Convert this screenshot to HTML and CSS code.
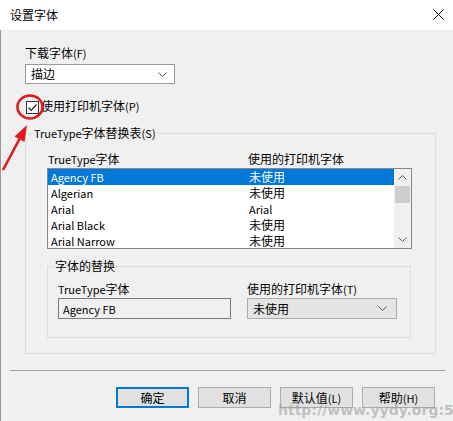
FILE: index.html
```html
<!DOCTYPE html>
<html lang="zh-CN">
<head>
<meta charset="utf-8">
<title>设置字体</title>
<link rel="stylesheet" href="styles.css">
</head>
<body>
<div class="window">
  <header class="titlebar">
    <span class="title">设置字体</span>
    <svg class="close" width="11" height="11" viewBox="0 0 11 11"><path d="M0.5 0.5 L10.5 10.5 M10.5 0.5 L0.5 10.5" stroke="#000" stroke-width="1" fill="none"/></svg>
  </header>
  <main class="client">
    <div class="content">
      <div class="lbl">下载字体<span class="lat">(F)</span></div>
      <div class="combo combo-white">
        <span>描边</span>
        <svg class="chev" width="9" height="5" viewBox="0 0 9 5"><path d="M0.5 0.5 L4.5 4.5 L8.5 0.5" stroke="#555" fill="none"/></svg>
      </div>
      <div class="check-row">
        <span class="checkbox"><svg width="11" height="11" viewBox="0 0 11 11"><path d="M1.5 5.5 L4.2 8.3 L9.5 2.5" stroke="#222" stroke-width="1.2" fill="none"/></svg></span>
        <span>使用打印机字体<span class="lat">(P)</span></span>
      </div>
      <fieldset class="group outer">
        <legend><span class="lat">TrueType</span>字体替换表<span class="lat">(S)</span></legend>
        <div class="outer-body">
          <div class="list-head"><span><span class="lat">TrueType</span>字体</span><span>使用的打印机字体</span></div>
          <div class="listbox">
            <div class="rows">
              <div class="row sel"><span class="lat">Agency FB</span><span>未使用</span></div>
              <div class="row"><span class="lat">Algerian</span><span>未使用</span></div>
              <div class="row"><span class="lat">Arial</span><span class="lat">Arial</span></div>
              <div class="row"><span class="lat">Arial Black</span><span>未使用</span></div>
              <div class="row"><span class="lat">Arial Narrow</span><span>未使用</span></div>
            </div>
            <div class="scrollbar">
              <div class="sb-btn"><svg width="9" height="5" viewBox="0 0 9 5"><path d="M0.5 4.5 L4.5 0.5 L8.5 4.5" stroke="#606060" fill="none"/></svg></div>
              <div class="sb-thumb"></div>
              <div class="sb-track"></div>
              <div class="sb-btn"><svg width="9" height="5" viewBox="0 0 9 5"><path d="M0.5 0.5 L4.5 4.5 L8.5 0.5" stroke="#606060" fill="none"/></svg></div>
            </div>
          </div>
          <fieldset class="group inner">
            <legend>字体的替换</legend>
            <div class="subst">
              <div class="field">
                <span class="lbl"><span class="lat">TrueType</span>字体</span>
                <div class="textbox"><span class="lat">Agency FB</span></div>
              </div>
              <div class="field">
                <span class="lbl">使用的打印机字体<span class="lat">(T)</span></span>
                <div class="combo combo-gray">
                  <span>未使用</span>
                  <svg class="chev" width="9" height="5" viewBox="0 0 9 5"><path d="M0.5 0.5 L4.5 4.5 L8.5 0.5" stroke="#555" fill="none"/></svg>
                </div>
              </div>
            </div>
          </fieldset>
        </div>
      </fieldset>
    </div>
    <div class="separator"></div>
    <div class="buttons">
      <button class="btn btn-default">确定</button>
      <button class="btn">取消</button>
      <button class="btn">默认值<span class="lat">(L)</span></button>
      <button class="btn">帮助<span class="lat">(H)</span></button>
    </div>
  </main>
  <div class="watermark">http://www.yydy.org:5</div>
  <svg class="annotation" width="60" height="90" viewBox="0 0 60 90">
    <ellipse cx="30" cy="17" rx="12.5" ry="11.5" stroke="#e3191b" stroke-width="2.6" fill="none"/>
    <line x1="3" y1="80" x2="20" y2="48" stroke="#e3191b" stroke-width="2.6"/>
    <polygon points="27,35 24.5,52 14.5,46.5" fill="#e3191b"/>
  </svg>
</div>
</body>
</html>
```
FILE: styles.css
```css
* { box-sizing: border-box; }
html, body { margin: 0; padding: 0; }
body {
  width: 453px;
  height: 421px;
  overflow: hidden;
  background: #f0f0f0;
  font-family: "Noto Sans CJK SC", "Noto Sans", sans-serif;
  font-size: 12px;
  line-height: 16px;
  color: #000;
}
.lat { font-size: 11px; }
.window { position: relative; width: 453px; height: 421px; }
.titlebar {
  height: 30px;
  background: #fff;
  display: flex;
  align-items: center;
  justify-content: space-between;
  padding: 0 9px 0 10px;
}
.title { font-size: 12px; }
.close { margin-top: -1px; }
.client {
  height: 391px;
  border-left: 1px solid #9a9a9a;
  background: #f0f0f0;
}
.content { padding: 15px 0 0 24px; }
.lbl { display: block; }
.combo {
  display: flex;
  align-items: center;
  justify-content: space-between;
  height: 20px;
}
.combo-white {
  margin-top: 3px;
  width: 150px;
  background: #fff;
  border: 1px solid #9a9a9a;
  padding: 0 7px 0 5px;
}
.combo-gray {
  width: 150px;
  height: 21px;
  background: #e5e5e5;
  border: 1px solid #adadad;
  padding: 0 9px 0 5px;
}
.check-row {
  display: flex;
  align-items: flex-start;
  margin-top: 14px;
  height: 16px;
}
.checkbox {
  width: 13px;
  height: 13px;
  margin: 3px 2px 0 1px;
  border: 1px solid #333;
  background: #fff;
  display: flex;
  align-items: center;
  justify-content: center;
}
.group {
  margin: 0;
  padding: 0;
  border: 1px solid #dcdcdc;
  min-width: 0;
}
.group legend {
  padding: 0 1px;
  line-height: 16px;
}
.outer {
  margin-top: 11px;
  width: 411px;
}
.outer > legend { margin-left: 7px; }
.outer-body { padding: 10px 23px 15px 21px; }
.list-head {
  display: grid;
  grid-template-columns: 200px 1fr;
  padding-left: 1px;
  margin-bottom: 1px;
}
.listbox {
  display: flex;
  width: 365px;
  height: 81px;
  border: 1px solid #828790;
  background: #fff;
}
.rows { flex: 1; overflow: hidden; }
.row {
  display: grid;
  grid-template-columns: 198px 1fr;
  height: 16px;
  padding-left: 3px;
}
.row.sel { background: #0078d7; color: #fff; }
.scrollbar {
  width: 17px;
  background: #f0f0f0;
  display: flex;
  flex-direction: column;
}
.sb-btn {
  height: 17px;
  display: flex;
  align-items: center;
  justify-content: center;
}
.sb-thumb { height: 17px; margin: 0 1px; background: #cdcdcd; }
.sb-track { flex: 1; }
.inner {
  margin-top: 9px;
  width: 364px;
}
.inner > legend { margin-left: 6px; }
.subst {
  display: flex;
  gap: 16px;
  padding: 7px 0 18px 10px;
}
.field .lbl { margin-bottom: 1px; }
.textbox {
  width: 173px;
  height: 21px;
  border: 1px solid #7a7a7a;
  background: #f0f0f0;
  padding-left: 4px;
  line-height: 19px;
}
.separator {
  margin: 16px 8px 0 9px;
  border-top: 1px solid #a0a0a0;
}
.buttons {
  display: flex;
  justify-content: flex-end;
  gap: 9px;
  margin-top: 16px;
  padding-right: 18px;
}
.btn {
  width: 73px;
  height: 21px;
  font: inherit;
  line-height: 17px;
  color: #000;
  background: #e1e1e1;
  border: 1px solid #adadad;
  padding: 0;
}
.btn-default { border: 2px solid #0078d7; }
.watermark {
  position: absolute;
  left: 278px;
  top: 402px;
  font-family: "DejaVu Sans", sans-serif;
  font-weight: bold;
  font-size: 14px;
  line-height: 16px;
  color: rgba(150, 150, 150, 0.55);
  white-space: nowrap;
}
.annotation { position: absolute; left: 0; top: 90px; }
```
